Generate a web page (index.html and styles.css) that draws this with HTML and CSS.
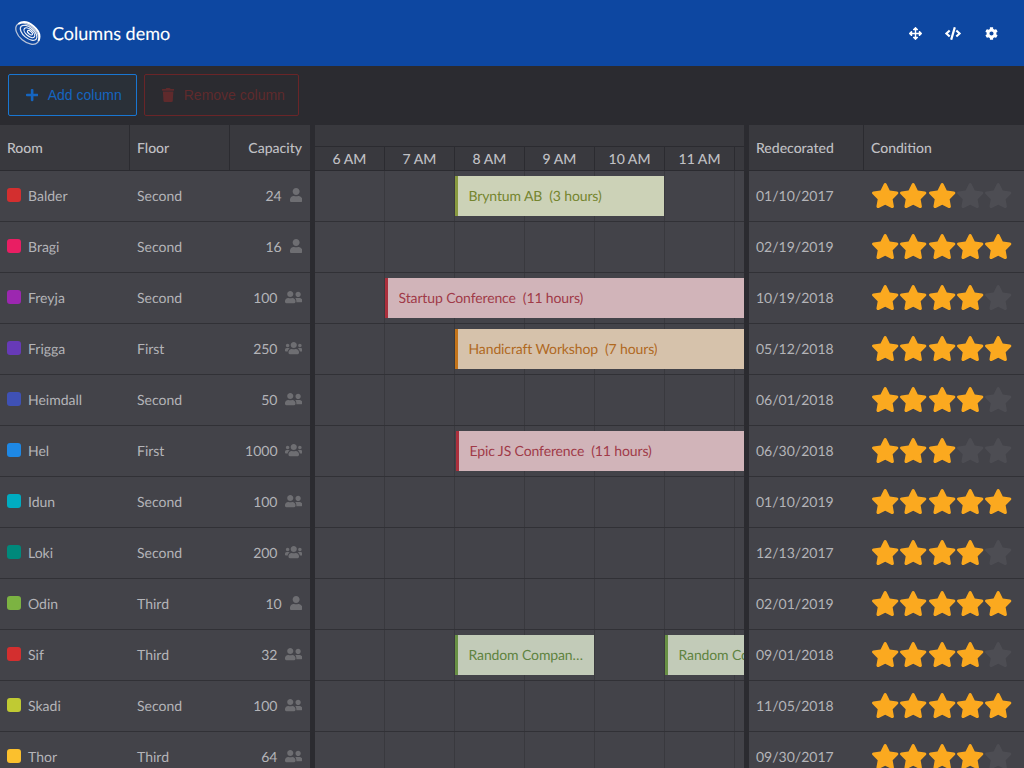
FILE: index.html
```html
<!DOCTYPE html>
<html lang="en">
<head>
<meta charset="utf-8">
<title>Columns demo</title>
<link rel="stylesheet" href="styles.css">
</head>
<body>
<svg class="defs" width="0" height="0">
  <symbol id="i-user" viewBox="0 0 448 512"><path d="M224 256c70.7 0 128-57.3 128-128S294.7 0 224 0 96 57.3 96 128s57.3 128 128 128zm89.6 32h-16.7c-22.2 10.2-46.9 16-72.9 16s-50.6-5.8-72.9-16h-16.7C60.2 288 0 348.2 0 422.4V464c0 26.5 21.5 48 48 48h352c26.5 0 48-21.5 48-48v-41.6c0-74.2-60.2-134.4-134.4-134.4z"/></symbol>
  <symbol id="i-friends" viewBox="0 0 640 512"><path d="M192 256c61.9 0 112-50.1 112-112S253.9 32 192 32 80 82.1 80 144s50.1 112 112 112zm76.8 32h-8.3c-20.8 10-43.9 16-68.5 16s-47.6-6-68.5-16h-8.3C51.6 288 0 339.6 0 403.2V432c0 26.5 21.5 48 48 48h288c26.5 0 48-21.5 48-48v-28.8c0-63.6-51.6-115.2-115.2-115.2zM480 256c53 0 96-43 96-96s-43-96-96-96-96 43-96 96 43 96 96 96zm48 32h-3.8c-13.9 4.8-28.6 8-44.2 8s-30.3-3.2-44.2-8H432c-20.4 0-39.2 5.9-55.7 15.4 24.4 26.3 39.7 61.2 39.7 99.8v38.4c0 2.2-.5 4.3-.6 6.4H592c26.5 0 48-21.5 48-48 0-61.9-50.1-112-112-112z"/></symbol>
  <symbol id="i-users" viewBox="0 0 640 512"><path d="M96 224c35.3 0 64-28.7 64-64s-28.7-64-64-64-64 28.7-64 64 28.7 64 64 64zm448 0c35.3 0 64-28.7 64-64s-28.7-64-64-64-64 28.7-64 64 28.7 64 64 64zm32 32h-64c-17.6 0-33.5 7.1-45.1 18.6 40.3 22.1 68.9 62 75.1 109.4h66c17.7 0 32-14.3 32-32v-32c0-35.3-28.7-64-64-64zm-256 0c61.9 0 112-50.1 112-112S381.9 32 320 32 208 82.1 208 144s50.1 112 112 112zm76.8 32h-8.3c-20.8 10-43.9 16-68.5 16s-47.6-6-68.5-16h-8.3C179.6 288 128 339.6 128 403.2V432c0 26.5 21.5 48 48 48h288c26.5 0 48-21.5 48-48v-28.8c0-63.6-51.6-115.2-115.2-115.2zm-223.7-13.4C161.5 263.1 145.6 256 128 256H64c-35.3 0-64 28.7-64 64v32c0 17.7 14.3 32 32 32h65.9c6.3-47.4 34.9-87.3 75.2-109.4z"/></symbol>
  <symbol id="i-star" viewBox="0 0 576 512"><path d="M259.3 17.8L194 150.2 47.9 171.5c-26.2 3.8-36.7 36.1-17.7 54.6l105.7 103-25 145.5c-4.5 26.3 23.2 46 46.4 33.7L288 439.6l130.7 68.7c23.2 12.2 50.9-7.4 46.4-33.7l-25-145.5 105.7-103c19-18.5 8.5-50.8-17.7-54.6L382 150.2 316.7 17.8c-11.7-23.6-45.6-24-57.4 0z"/></symbol>
</svg>

<header class="app-bar">
  <svg class="logo" viewBox="-1 -1 30 30" width="27" height="27">
    <g transform="rotate(40 14 14)" fill="none">
      <ellipse cx="14" cy="14.2" rx="15" ry="9" stroke="#b9c4d8" stroke-width="1.4"/>
      <path d="M-.6 12.5C1 6.5 7 3.6 14 3.6s13 2.9 14.6 8.9" stroke="#fff" stroke-width="2.2"/>
      <ellipse cx="14.5" cy="12.6" rx="11" ry="5.9" stroke="#e6ebf3" stroke-width="1.4"/>
      <ellipse cx="15" cy="12" rx="7.2" ry="3.6" stroke="#f4f6fa" stroke-width="1.3"/>
      <ellipse cx="15.5" cy="11.6" rx="3.4" ry="1.5" stroke="#fff" stroke-width="1.2"/>
    </g>
  </svg>
  <h1 class="app-title">Columns demo</h1>
  <nav class="app-actions">
    <button class="icon-btn" type="button" aria-label="Move"><svg viewBox="0 0 512 512" width="13" height="13"><path d="M352.201 425.775l-79.196 79.196c-9.373 9.373-24.568 9.373-33.941 0l-79.196-79.196c-15.119-15.119-4.411-40.971 16.971-40.97h51.162L228 284H127.196v51.162c0 21.382-25.851 32.09-40.971 16.971L7.029 272.937c-9.373-9.373-9.373-24.569 0-33.941L86.225 159.8c15.119-15.119 40.971-4.411 40.971 16.971V228H228V127.196h-51.23c-21.382 0-32.09-25.851-16.971-40.971l79.196-79.196c9.373-9.373 24.568-9.373 33.941 0l79.196 79.196c15.119 15.119 4.411 40.971-16.971 40.971h-51.162V228h100.804v-51.162c0-21.382 25.851-32.09 40.97-16.971l79.196 79.196c9.373 9.373 9.373 24.569 0 33.941L425.773 352.2c-15.119 15.119-40.971 4.411-40.97-16.971V284H284v100.804h51.23c21.382 0 32.09 25.851 16.971 40.971z"/></svg></button>
    <button class="icon-btn" type="button" aria-label="Code"><svg viewBox="0 0 640 512" width="16" height="13"><path d="M278.9 511.5l-61-17.7c-6.4-1.8-10-8.5-8.2-14.9L346.2 8.7c1.8-6.4 8.5-10 14.9-8.2l61 17.7c6.4 1.8 10 8.5 8.2 14.9L293.8 503.3c-1.9 6.4-8.5 10.1-14.9 8.2zm-114-112.2l43.5-46.4c4.6-4.9 4.3-12.7-.8-17.2L117 256l90.6-79.7c5.1-4.5 5.5-12.3.8-17.2l-43.5-46.4c-4.5-4.8-12.1-5.1-17-.5L3.8 247.2c-5.1 4.7-5.1 12.8 0 17.5l144.1 135.1c4.9 4.6 12.5 4.4 17-.5zm327.2.6l144.1-135.1c5.1-4.7 5.1-12.8 0-17.5L492.1 112.1c-4.8-4.5-12.4-4.3-17 .5L431.6 159c-4.6 4.9-4.3 12.7.8 17.2L523 256l-90.6 79.7c-5.1 4.5-5.5 12.3-.8 17.2l43.5 46.4c4.5 4.9 12.1 5.1 17 .6z"/></svg></button>
    <button class="icon-btn" type="button" aria-label="Settings"><svg viewBox="0 0 512 512" width="13" height="13"><path d="M487.4 315.7l-42.6-24.6c4.3-23.2 4.3-47 0-70.2l42.6-24.6c4.9-2.8 7.1-8.6 5.5-14-11.1-35.6-30-67.8-54.7-94.6-3.8-4.1-10-5.1-14.8-2.3L380.8 110c-17.9-15.4-38.5-27.3-60.8-35.1V25.8c0-5.6-3.9-10.5-9.4-11.7-36.7-8.2-74.3-7.8-109.2 0-5.5 1.2-9.4 6.1-9.4 11.7V75c-22.2 7.9-42.8 19.8-60.8 35.1L88.7 85.5c-4.9-2.8-11-1.9-14.8 2.3-24.7 26.7-43.6 58.9-54.7 94.6-1.7 5.4.6 11.2 5.5 14L67.3 221c-4.3 23.2-4.3 47 0 70.2l-42.6 24.6c-4.9 2.8-7.1 8.6-5.5 14 11.1 35.6 30 67.8 54.7 94.6 3.8 4.1 10 5.1 14.8 2.3l42.6-24.6c17.9 15.4 38.5 27.3 60.8 35.1v49.2c0 5.6 3.9 10.5 9.4 11.7 36.7 8.2 74.3 7.8 109.2 0 5.5-1.2 9.4-6.1 9.4-11.7v-49.2c22.2-7.9 42.8-19.8 60.8-35.1l42.6 24.6c4.9 2.8 11 1.9 14.8-2.3 24.7-26.7 43.6-58.9 54.7-94.6 1.5-5.5-.7-11.3-5.6-14.1zM256 336c-44.1 0-80-35.9-80-80s35.9-80 80-80 80 35.9 80 80-35.9 80-80 80z"/></svg></button>
  </nav>
</header>

<div class="toolbar">
  <button class="btn btn-add" type="button"><svg viewBox="0 0 448 512" width="12.25" height="14"><path d="M416 208H272V64c0-17.67-14.33-32-32-32h-32c-17.67 0-32 14.33-32 32v144H32c-17.67 0-32 14.33-32 32v32c0 17.67 14.33 32 32 32h144v144c0 17.67 14.33 32 32 32h32c17.67 0 32-14.33 32-32V304h144c17.67 0 32-14.33 32-32v-32c0-17.67-14.33-32-32-32z"/></svg>Add column</button>
  <button class="btn btn-remove" type="button"><svg viewBox="0 0 448 512" width="12.25" height="14"><path d="M432 32H312l-9.4-18.7A24 24 0 0 0 281.1 0H166.8a23.72 23.72 0 0 0-21.4 13.3L136 32H16A16 16 0 0 0 0 48v32a16 16 0 0 0 16 16h416a16 16 0 0 0 16-16V48a16 16 0 0 0-16-16zM53.2 467a48 48 0 0 0 47.9 45h245.8a48 48 0 0 0 47.9-45L416 128H32z"/></svg>Remove column</button>
</div>

<main class="grid">
  <section class="pane pane-left">
    <div class="head-row">
      <div class="hcell c-room">Room</div>
      <div class="hcell c-floor">Floor</div>
      <div class="hcell c-cap">Capacity</div>
    </div>
    <div class="row"><div class="cell c-room"><i class="dot" style="background:#d32f2f"></i>Balder</div><div class="cell c-floor">Second</div><div class="cell c-cap">24<svg class="pi pi-1"><use href="#i-user"/></svg></div></div>
    <div class="row"><div class="cell c-room"><i class="dot" style="background:#e91e63"></i>Bragi</div><div class="cell c-floor">Second</div><div class="cell c-cap">16<svg class="pi pi-1"><use href="#i-user"/></svg></div></div>
    <div class="row"><div class="cell c-room"><i class="dot" style="background:#9c27b0"></i>Freyja</div><div class="cell c-floor">Second</div><div class="cell c-cap">100<svg class="pi pi-2"><use href="#i-friends"/></svg></div></div>
    <div class="row"><div class="cell c-room"><i class="dot" style="background:#673ab7"></i>Frigga</div><div class="cell c-floor">First</div><div class="cell c-cap">250<svg class="pi pi-2"><use href="#i-users"/></svg></div></div>
    <div class="row"><div class="cell c-room"><i class="dot" style="background:#3f51b5"></i>Heimdall</div><div class="cell c-floor">Second</div><div class="cell c-cap">50<svg class="pi pi-2"><use href="#i-friends"/></svg></div></div>
    <div class="row"><div class="cell c-room"><i class="dot" style="background:#1e88e5"></i>Hel</div><div class="cell c-floor">First</div><div class="cell c-cap">1000<svg class="pi pi-2"><use href="#i-users"/></svg></div></div>
    <div class="row"><div class="cell c-room"><i class="dot" style="background:#00acc1"></i>Idun</div><div class="cell c-floor">Second</div><div class="cell c-cap">100<svg class="pi pi-2"><use href="#i-friends"/></svg></div></div>
    <div class="row"><div class="cell c-room"><i class="dot" style="background:#00897b"></i>Loki</div><div class="cell c-floor">Second</div><div class="cell c-cap">200<svg class="pi pi-2"><use href="#i-users"/></svg></div></div>
    <div class="row"><div class="cell c-room"><i class="dot" style="background:#7cb342"></i>Odin</div><div class="cell c-floor">Third</div><div class="cell c-cap">10<svg class="pi pi-1"><use href="#i-user"/></svg></div></div>
    <div class="row"><div class="cell c-room"><i class="dot" style="background:#d32f2f"></i>Sif</div><div class="cell c-floor">Third</div><div class="cell c-cap">32<svg class="pi pi-2"><use href="#i-friends"/></svg></div></div>
    <div class="row"><div class="cell c-room"><i class="dot" style="background:#c0ca33"></i>Skadi</div><div class="cell c-floor">Second</div><div class="cell c-cap">100<svg class="pi pi-2"><use href="#i-friends"/></svg></div></div>
    <div class="row"><div class="cell c-room"><i class="dot" style="background:#fbc02d"></i>Thor</div><div class="cell c-floor">Third</div><div class="cell c-cap">64<svg class="pi pi-2"><use href="#i-friends"/></svg></div></div>
  </section>

  <section class="pane pane-time">
    <div class="time-head">
      <div class="time-top"></div>
      <div class="time-ticks">
        <div class="tick">6 AM</div><div class="tick">7 AM</div><div class="tick">8 AM</div><div class="tick">9 AM</div><div class="tick">10 AM</div><div class="tick">11 AM</div><div class="tick"></div>
      </div>
    </div>
    <div class="row trow"><b></b><b></b><b></b><b></b><b></b><b></b><b></b>
      <div class="event ev-lime" style="left:140px;width:209px"><span>Bryntum AB&nbsp; (3 hours)</span></div></div>
    <div class="row trow"><b></b><b></b><b></b><b></b><b></b><b></b><b></b></div>
    <div class="row trow"><b></b><b></b><b></b><b></b><b></b><b></b><b></b>
      <div class="event ev-red ev-wide" style="left:70px;width:770px"><span>Startup Conference&nbsp; (11 hours)</span></div></div>
    <div class="row trow"><b></b><b></b><b></b><b></b><b></b><b></b><b></b>
      <div class="event ev-orange" style="left:140px;width:490px"><span>Handicraft Workshop&nbsp; (7 hours)</span></div></div>
    <div class="row trow"><b></b><b></b><b></b><b></b><b></b><b></b><b></b></div>
    <div class="row trow"><b></b><b></b><b></b><b></b><b></b><b></b><b></b>
      <div class="event ev-red" style="left:141px;width:770px"><span>Epic JS Conference&nbsp; (11 hours)</span></div></div>
    <div class="row trow"><b></b><b></b><b></b><b></b><b></b><b></b><b></b></div>
    <div class="row trow"><b></b><b></b><b></b><b></b><b></b><b></b><b></b></div>
    <div class="row trow"><b></b><b></b><b></b><b></b><b></b><b></b><b></b></div>
    <div class="row trow"><b></b><b></b><b></b><b></b><b></b><b></b><b></b>
      <div class="event ev-green" style="left:140px;width:139px"><span>Random Company meeting</span></div>
      <div class="event ev-green" style="left:350px;width:139px"><span>Random Company meeting</span></div></div>
    <div class="row trow"><b></b><b></b><b></b><b></b><b></b><b></b><b></b></div>
    <div class="row trow"><b></b><b></b><b></b><b></b><b></b><b></b><b></b></div>
  </section>

  <section class="pane pane-right">
    <div class="head-row">
      <div class="hcell c-date">Redecorated</div>
      <div class="hcell c-cond">Condition</div>
    </div>
    <div class="row"><div class="cell c-date">01/10/2017</div><div class="cell c-cond"><svg class="star on"><use href="#i-star"/></svg><svg class="star on"><use href="#i-star"/></svg><svg class="star on"><use href="#i-star"/></svg><svg class="star"><use href="#i-star"/></svg><svg class="star"><use href="#i-star"/></svg></div></div>
    <div class="row"><div class="cell c-date">02/19/2019</div><div class="cell c-cond"><svg class="star on"><use href="#i-star"/></svg><svg class="star on"><use href="#i-star"/></svg><svg class="star on"><use href="#i-star"/></svg><svg class="star on"><use href="#i-star"/></svg><svg class="star on"><use href="#i-star"/></svg></div></div>
    <div class="row"><div class="cell c-date">10/19/2018</div><div class="cell c-cond"><svg class="star on"><use href="#i-star"/></svg><svg class="star on"><use href="#i-star"/></svg><svg class="star on"><use href="#i-star"/></svg><svg class="star on"><use href="#i-star"/></svg><svg class="star"><use href="#i-star"/></svg></div></div>
    <div class="row"><div class="cell c-date">05/12/2018</div><div class="cell c-cond"><svg class="star on"><use href="#i-star"/></svg><svg class="star on"><use href="#i-star"/></svg><svg class="star on"><use href="#i-star"/></svg><svg class="star on"><use href="#i-star"/></svg><svg class="star on"><use href="#i-star"/></svg></div></div>
    <div class="row"><div class="cell c-date">06/01/2018</div><div class="cell c-cond"><svg class="star on"><use href="#i-star"/></svg><svg class="star on"><use href="#i-star"/></svg><svg class="star on"><use href="#i-star"/></svg><svg class="star on"><use href="#i-star"/></svg><svg class="star"><use href="#i-star"/></svg></div></div>
    <div class="row"><div class="cell c-date">06/30/2018</div><div class="cell c-cond"><svg class="star on"><use href="#i-star"/></svg><svg class="star on"><use href="#i-star"/></svg><svg class="star on"><use href="#i-star"/></svg><svg class="star"><use href="#i-star"/></svg><svg class="star"><use href="#i-star"/></svg></div></div>
    <div class="row"><div class="cell c-date">01/10/2019</div><div class="cell c-cond"><svg class="star on"><use href="#i-star"/></svg><svg class="star on"><use href="#i-star"/></svg><svg class="star on"><use href="#i-star"/></svg><svg class="star on"><use href="#i-star"/></svg><svg class="star on"><use href="#i-star"/></svg></div></div>
    <div class="row"><div class="cell c-date">12/13/2017</div><div class="cell c-cond"><svg class="star on"><use href="#i-star"/></svg><svg class="star on"><use href="#i-star"/></svg><svg class="star on"><use href="#i-star"/></svg><svg class="star on"><use href="#i-star"/></svg><svg class="star"><use href="#i-star"/></svg></div></div>
    <div class="row"><div class="cell c-date">02/01/2019</div><div class="cell c-cond"><svg class="star on"><use href="#i-star"/></svg><svg class="star on"><use href="#i-star"/></svg><svg class="star on"><use href="#i-star"/></svg><svg class="star on"><use href="#i-star"/></svg><svg class="star on"><use href="#i-star"/></svg></div></div>
    <div class="row"><div class="cell c-date">09/01/2018</div><div class="cell c-cond"><svg class="star on"><use href="#i-star"/></svg><svg class="star on"><use href="#i-star"/></svg><svg class="star on"><use href="#i-star"/></svg><svg class="star on"><use href="#i-star"/></svg><svg class="star"><use href="#i-star"/></svg></div></div>
    <div class="row"><div class="cell c-date">11/05/2018</div><div class="cell c-cond"><svg class="star on"><use href="#i-star"/></svg><svg class="star on"><use href="#i-star"/></svg><svg class="star on"><use href="#i-star"/></svg><svg class="star on"><use href="#i-star"/></svg><svg class="star on"><use href="#i-star"/></svg></div></div>
    <div class="row"><div class="cell c-date">09/30/2017</div><div class="cell c-cond"><svg class="star on"><use href="#i-star"/></svg><svg class="star on"><use href="#i-star"/></svg><svg class="star on"><use href="#i-star"/></svg><svg class="star on"><use href="#i-star"/></svg><svg class="star"><use href="#i-star"/></svg></div></div>
  </section>
</main>
</body>
</html>
```

FILE: styles.css
```css
* { box-sizing: border-box; }
html, body { margin: 0; height: 100%; overflow: hidden; }
body {
  display: flex;
  flex-direction: column;
  background: #2b2b30;
  font-family: Lato, "Liberation Sans", sans-serif;
  font-size: 14px;
  color: #b4b4b8;
  text-rendering: geometricPrecision;
}
.defs { position: absolute; }

.app-bar {
  flex: none;
  height: 66px;
  display: flex;
  align-items: center;
  background: #0d47a1;
  color: #fff;
  padding-left: 13.5px;
}
.logo { flex: none; margin-right: 11.5px; }
.app-title { margin: 0; font-size: 18px; font-weight: 400; -webkit-text-stroke: .1px #fff; }
.app-actions { margin-left: auto; display: flex; padding-right: 14px; }
.icon-btn {
  width: 38px;
  height: 38px;
  display: flex;
  align-items: center;
  justify-content: center;
  padding: 0;
  border: 0;
  background: none;
}
.icon-btn svg { fill: #fff; }

.toolbar {
  flex: none;
  height: 59px;
  display: flex;
  gap: 7px;
  padding: 8px;
  background: #2b2b30;
}
.btn {
  height: 42px;
  display: flex;
  align-items: center;
  gap: 10px;
  padding: 0 0 0 16.5px;
  border: 1px solid;
  border-radius: 2px;
  background: transparent;
  font-family: "Liberation Sans", Arial, sans-serif;
  font-size: 14px;
  white-space: nowrap;
}
.btn svg { fill: currentColor; flex: none; }
.btn-add { width: 129px; color: #1565c0; border-color: #1976d2; background: #2a3038; }
.btn-remove { width: 155px; color: #5f2a2c; border-color: #6a2528; }

.grid { flex: 1; min-height: 0; display: flex; gap: 5px; overflow: hidden; }
.pane { flex: none; }
.pane-left { width: 310px; }
.pane-time { width: 429px; overflow: hidden; }
.pane-right { flex: 1; }

.head-row {
  height: 46px;
  display: flex;
  background: #39393e;
  border-bottom: 1px solid #2b2b30;
}
.hcell {
  display: flex;
  align-items: center;
  padding: 0 7px;
  border-right: 1px solid #2b2b30;
  font-weight: 500;
  color: #c0c0c4;
}
.hcell:last-child { border-right: 0; }

.row {
  height: 51px;
  display: flex;
  background: #434349;
  border-bottom: 1px solid #313136;
}
.cell { display: flex; align-items: center; padding: 0 7px 2px; }

.c-room { width: 130px; }
.c-floor { width: 100px; }
.c-cap { width: 80px; justify-content: flex-end; }
.cell.c-cap, .hcell.c-cap { padding-right: 8px; }
.c-date { width: 115px; }
.c-cond { flex: 1; }

.dot { flex: none; width: 14px; height: 14px; border-radius: 3px; margin-right: 7px; }

.pi { flex: none; fill: #6e6e72; height: 14px; }
.pi-1 { width: 12.25px; margin-left: 8px; }
.pi-2 { width: 17.5px; margin-left: 7px; }

.star { flex: none; width: 28.35px; height: 25.2px; fill: #4d4d53; }
.star.on { fill: #fba91f; }
.cell.c-cond { padding-bottom: 1px; }

.time-head { height: 46px; background: #39393e; border-bottom: 1px solid #2b2b30; }
.time-top { height: 22px; border-bottom: 1px solid #2b2b30; }
.time-ticks { height: 23px; display: flex; }
.tick {
  flex: none;
  width: 70px;
  display: flex;
  align-items: center;
  justify-content: center;
  border-right: 1px solid #2b2b30;
  font-weight: 500;
  color: #c0c0c4;
}

.trow { position: relative; width: 490px; }
.trow b { flex: none; width: 70px; border-right: 1px solid #39393e; }

.event {
  position: absolute;
  top: 5px;
  height: 40px;
  display: flex;
  align-items: center;
  padding: 0 8px 2px 10.5px;
  border-left: 3px solid;
  letter-spacing: -.12px;
}
.event span { overflow: hidden; white-space: nowrap; text-overflow: ellipsis; }
.ev-lime { background: rgba(209, 215, 187, .97); border-color: #88993f; color: #75852f; }
.ev-red { background: rgba(214, 184, 189, .97); border-color: #ab2f3c; color: #a03a48; }
.ev-orange { background: rgba(219, 198, 174, .97); border-color: #c4741a; color: #b0691f; }
.ev-green { background: rgba(198, 208, 188, .97); border-color: #689044; color: #5f8340; }
```
